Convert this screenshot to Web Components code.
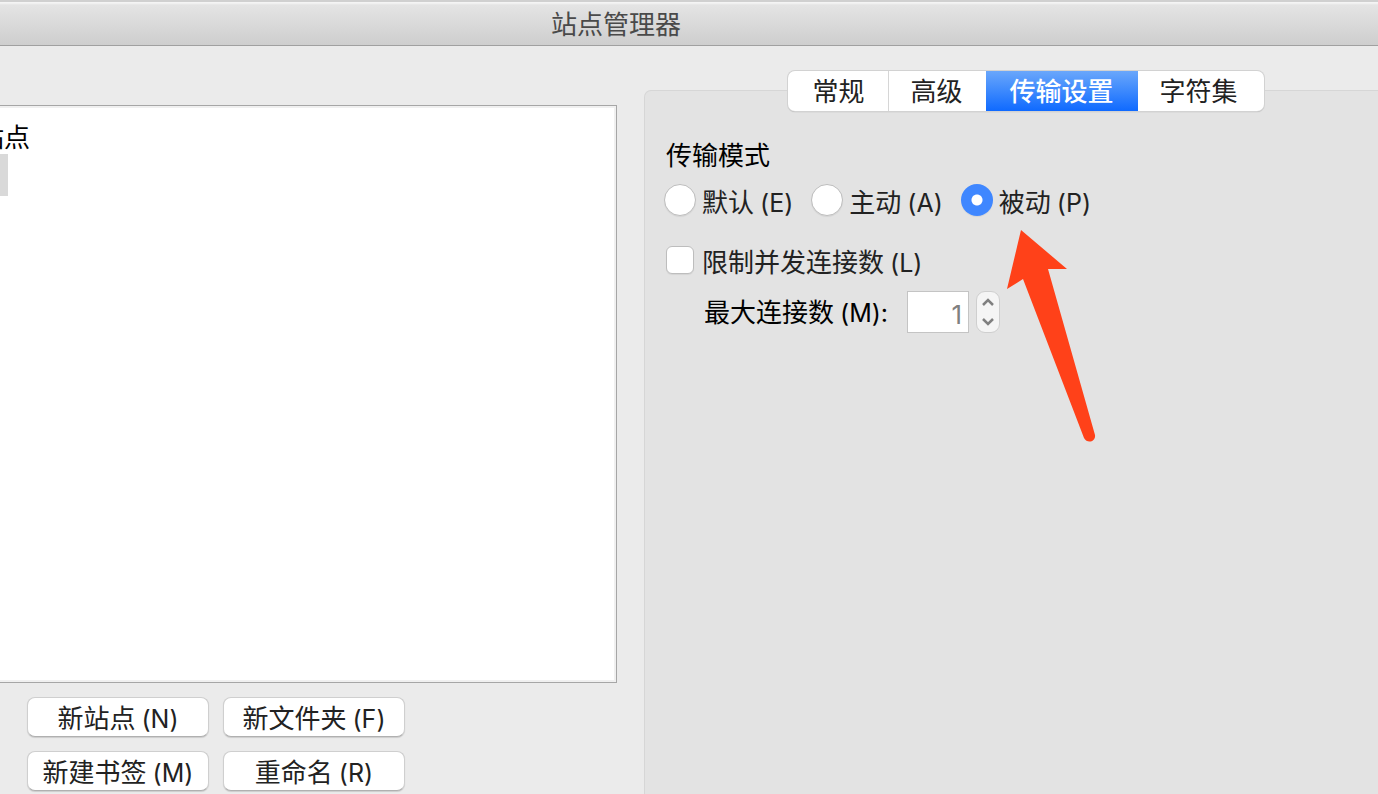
<!DOCTYPE html>
<html lang="zh-CN">
<head>
<meta charset="utf-8">
<title>站点管理器</title>
<style>
html, body { margin: 0; height: 100%; }
body { font: 26px/40px "Noto Sans CJK SC", sans-serif; color: #222; background: #ebebeb; overflow: hidden; }
</style>
</head>
<body>
<site-manager></site-manager>
<script>
const define = (name, html, setup) => customElements.define(name, class extends HTMLElement {
  connectedCallback() {
    if (this.shadowRoot) return;
    const root = this.attachShadow({ mode: 'open' });
    const t = document.createElement('template');
    t.innerHTML = html;
    root.append(t.content.cloneNode(true));
    if (setup) setup(this, root);
  }
});

const keyStyle = `.key { font-family: Inter, "Noto Sans CJK SC", sans-serif; font-size: 25px; margin-left: 6px; }`;

define('title-bar', `
<style>
:host { display: block; box-sizing: border-box; height: 46px; padding: 1px 146px 0 0; text-align: center;
  border-top: 2px solid #d0d0d0; border-bottom: 1px solid #a0a0a0; color: #4a4a4a;
  background: linear-gradient(#f4f4f4 0 1px, #e4e4e4 3px, #cecece 100%); }
h1 { margin: 0; font: inherit; }
</style><h1><slot></slot></h1>`);

define('push-button', `
<style>
:host { display: block; }
button { display: block; box-sizing: border-box; width: 100%; height: 40px; padding: 0; font: inherit; line-height: 38px; color: #222;
  background: #fff; border: 1px solid #cfcfcf; border-bottom-color: #b0b0b0; border-radius: 8px; box-shadow: 0 1px 1px #0002; }
</style><button type="button"><slot></slot></button>`);

define('site-tree', `
<style>
:host { display: block; box-sizing: border-box; overflow: hidden; background: #fff;
  border: solid #a6a6a6; border-width: 1px 1px 1px 0; box-shadow: inset -2px -2px #f0f0f0, inset 0 2px #f0f0f0; padding-top: 10px; }
ul { margin: 0; padding: 0; list-style: none; color: #000; }
.root { margin-left: -22px; height: 38px; white-space: nowrap; }
.selected { width: 8px; height: 42px; background: #d9d9d9; }
</style>
<ul><li class="root">站点</li><li class="selected"></li></ul>`);

define('tab-bar', `
<style>
:host { display: flex; box-sizing: border-box; height: 40px; border-radius: 7px; background: #fff;
  box-shadow: 0 0 0 1px #d2d2d2, 0 1px 1px #999; }
button { box-sizing: border-box; height: 40px; padding: 0 24px 2px; border: 0; background: none; font: inherit; line-height: 38px; color: #222; }
button:first-of-type { border-right: 1px solid #d6d6d6; }
button:nth-of-type(2) { padding: 0 23px 2px 21px; }
button[aria-selected="true"] { font-weight: 500; color: #fff; background: linear-gradient(#6aa7fb, #0f6aff); }
button:last-of-type { padding: 0 26px 2px 22px; }
</style>
<button role="tab" aria-selected="false">常规</button><button role="tab" aria-selected="false">高级</button><button role="tab" aria-selected="true">传输设置</button><button role="tab" aria-selected="false">字符集</button>`);

define('choice-item', `
<style>
:host { display: block; }
label { display: flex; align-items: center; white-space: nowrap; }
input { appearance: none; box-sizing: border-box; flex: none; background: #fff; border: 1px solid #bdbdbd; box-shadow: 0 1px 1px #0001; }
input[type=radio] { width: 32px; height: 32px; margin: 0 6px 4px 0; border-radius: 50%; }
input[type=radio]:checked { border: 0; background: radial-gradient(circle, #fff 5px, #3f87ff 6px); }
input[type=checkbox] { width: 28px; height: 28px; margin: 0 8px 4px 2px; border-radius: 6px; }
</style>
<label><input><span><slot></slot></span></label>`, (host, root) => {
  const input = root.querySelector('input');
  input.type = host.getAttribute('kind');
  input.checked = host.hasAttribute('checked');
});

define('number-stepper', `
<style>
:host { display: flex; align-items: center; }
label { color: #000; margin-right: 19px; white-space: nowrap; }
input { box-sizing: border-box; width: 62px; height: 42px; margin: 0 7px 0 0; padding: 4px 6px 0 0; text-align: right;
  border: 1px solid #c4c4c4; border-radius: 0; background: #fff; color: #808080; font: 26px Inter, sans-serif; }
.steps { display: flex; flex-direction: column; box-sizing: border-box; width: 24px; height: 42px; border: 1px solid #cfcfcf; border-radius: 9px; background: #f5f5f5; }
button { flex: 1; display: flex; align-items: center; justify-content: center; padding: 0; border: 0; background: none; }
svg { width: 12px; height: 8px; fill: none; stroke: #808080; stroke-width: 2.5; }
${keyStyle}
</style>
<label for="max">最大连接数<span class="key">(M):</span></label>
<input id="max" value="1" disabled>
<div class="steps">
<button type="button" aria-label="+" disabled><svg viewBox="0 0 12 8"><path d="M1 7l5-5 5 5"/></svg></button>
<button type="button" aria-label="-" disabled><svg viewBox="0 0 12 8"><path d="M1 1l5 5 5-5"/></svg></button>
</div>`);

define('pointer-arrow', `
<style>:host { display: block; } svg { display: block; width: 90px; height: 214px; }</style>
<svg viewBox="0 0 90 214" fill="#ff4119"><path d="M15 0L61 39H42L89 205C90 212 81 214 78 208L17 49L1 59Z"/></svg>`);

define('transfer-settings', `
<style>
:host { display: block; }
h2 { margin: 0 0 7px 2px; font: inherit; color: #000; }
.modes { display: flex; gap: 18px; margin-bottom: 18px; }
number-stepper { margin: 8px 0 0 40px; }
${keyStyle}
</style>
<h2>传输模式</h2>
<div class="modes" role="radiogroup">
<choice-item kind="radio">默认<span class="key">(E)</span></choice-item>
<choice-item kind="radio">主动<span class="key">(A)</span></choice-item>
<choice-item kind="radio" checked>被动<span class="key">(P)</span></choice-item>
</div>
<choice-item kind="checkbox">限制并发连接数<span class="key">(L)</span></choice-item>
<number-stepper></number-stepper>`);

define('site-manager', `
<style>
:host { display: flex; flex-direction: column; height: 100vh; overflow: hidden; }
main { flex: 1; min-height: 0; display: grid; grid-template-columns: minmax(0, 617fr) minmax(0, 734fr); grid-template-rows: minmax(0, 1fr); gap: 27px; }
.left { display: flex; flex-direction: column; padding: 59px 0 3px; }
site-tree { flex: 1; }
.buttons { display: grid; grid-template-columns: 182px 182px; gap: 14px; padding: 14px 0 0 27px; }
.right { position: relative; display: flex; flex-direction: column; align-items: center; margin-right: -30px; padding-top: 25px; }
tab-bar { position: relative; z-index: 1; }
.panel { flex: 1; align-self: stretch; margin-top: -21px; padding: 43px 19px 0; border: 1px solid #d6d6d6; border-bottom: 0; border-radius: 7px 7px 0 0; background: #e3e3e3; }
pointer-arrow { position: absolute; left: 362px; top: 184px; }
${keyStyle}
</style>
<title-bar>站点管理器</title-bar>
<main>
<section class="left">
<site-tree></site-tree>
<div class="buttons">
<push-button>新站点<span class="key">(N)</span></push-button>
<push-button>新文件夹<span class="key">(F)</span></push-button>
<push-button>新建书签<span class="key">(M)</span></push-button>
<push-button>重命名<span class="key">(R)</span></push-button>
</div>
</section>
<section class="right">
<tab-bar role="tablist"></tab-bar>
<div class="panel"><transfer-settings></transfer-settings></div>
<pointer-arrow></pointer-arrow>
</section>
</main>`);
</script>
</body>
</html>
